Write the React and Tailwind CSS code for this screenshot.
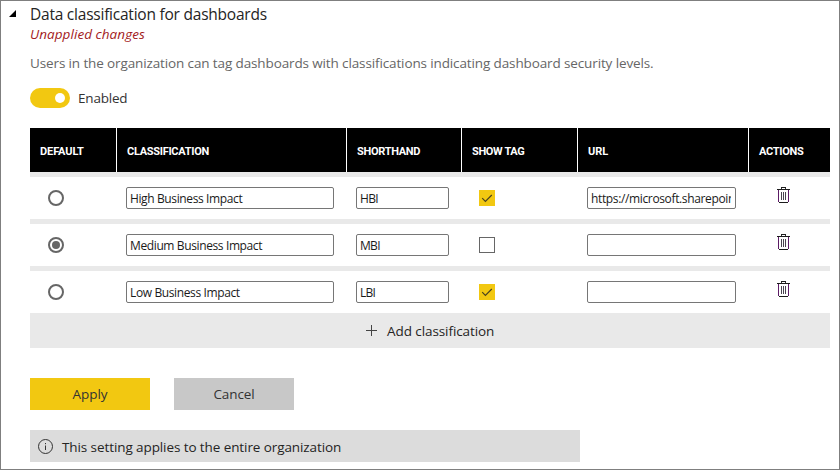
import React, { useState } from 'react';

const COLUMNS = 'grid grid-cols-[87px_230px_115px_116px_171px_81px]';

const HEADERS = [
  { label: 'DEFAULT', style: 'border-r tracking-[-0.1px]' },
  { label: 'CLASSIFICATION', style: 'border-r tracking-[-0.29px]' },
  { label: 'SHORTHAND', style: 'border-r tracking-[-0.3px]' },
  { label: 'SHOW TAG', style: 'border-r tracking-[-0.35px]' },
  { label: 'URL', style: 'border-r' },
  { label: 'ACTIONS', style: 'tracking-[-0.28px]' },
];

const INITIAL_ROWS = [
  { name: 'High Business Impact', short: 'HBI', tag: true, url: 'https://microsoft.sharepoint.com' },
  { name: 'Medium Business Impact', short: 'MBI', tag: false, url: '' },
  { name: 'Low Business Impact', short: 'LBI', tag: true, url: '' },
];

function Field({ value, label, size }) {
  return (
    <div className={`${size} h-[22px] rounded-[2px] border border-[#767676] bg-white pl-[3px] pr-[4px] pt-px`}>
      <input
        aria-label={label}
        defaultValue={value}
        className="block h-[19px] w-full overflow-hidden bg-transparent p-0 text-[12px] leading-[19px] text-[#1a1a1a] outline-none"
      />
    </div>
  );
}

function TrashIcon() {
  return (
    <svg width="13" height="16" viewBox="0 0 13 16" fill="none" shapeRendering="crispEdges">
      <path d="M0 2.5H13M4 .5H9M2 15.5H11" stroke="#1c1c1c" />
      <path d="M4.5 1V2M8.5 1V2" stroke="#333" />
      <path d="M1.5 3V15M11.5 3V15" stroke="#5c1c66" />
      <path d="M4.5 5V13M6.5 5V13M8.5 5V13" stroke="#4a4450" />
    </svg>
  );
}

function Radio({ checked, onClick }) {
  return (
    <button
      onClick={onClick}
      className="flex size-4 items-center justify-center rounded-full border-2 border-[#666] bg-white"
    >
      {checked && <span className="size-2 rounded-full bg-[#666]" />}
    </button>
  );
}

function Checkbox({ checked, onClick }) {
  return checked ? (
    <button onClick={onClick} className="size-4 bg-[#f2c811]">
      <svg width="16" height="16" viewBox="0 0 16 16" fill="none">
        <path d="M3.2 8.2L6.4 11.4L12.8 5" stroke="#4a4320" strokeWidth="1.2" />
      </svg>
    </button>
  ) : (
    <button onClick={onClick} className="size-4 border border-[#666] bg-white" />
  );
}

function Row({ row, index, selected, onSelect, onToggle }) {
  return (
    <div className={`${COLUMNS} h-[47px] border-t-[5px] border-[#e9e9e9] bg-white`}>
      <div className="flex items-center pl-[18px]">
        <Radio checked={selected === index} onClick={() => onSelect(index)} />
      </div>
      <div className="pl-[9px] pt-[10px]">
        <Field label="Classification" value={row.name} size="w-[208px] tracking-[-0.38px]" />
      </div>
      <div className="pl-[9px] pt-[10px]">
        <Field label="Shorthand" value={row.short} size="w-[93px] tracking-[-0.7px]" />
      </div>
      <div className="flex items-center pl-[17px]">
        <Checkbox checked={row.tag} onClick={() => onToggle(index)} />
      </div>
      <div className="pl-[9px] pt-[10px]">
        <Field label="URL" value={row.url} size="w-[149px] tracking-[-0.36px]" />
      </div>
      <div className="pl-[28px] pt-[10px]">
        <TrashIcon />
      </div>
    </div>
  );
}

export default function App() {
  const [rows, setRows] = useState(INITIAL_ROWS);
  const [selected, setSelected] = useState(1);
  const toggle = (index) =>
    setRows(rows.map((row, i) => (i === index ? { ...row, tag: !row.tag } : row)));

  return (
    <div className="flex h-[470px] w-[840px] overflow-hidden border border-[#7f7f7f] bg-white font-['Open_Sans','Noto_Sans',sans-serif] text-[13.5px] text-[#333]">
      <div className="w-[29px] shrink-0 pl-[8px] pt-[9px]">
        <svg width="7" height="7" viewBox="0 0 7 7">
          <path d="M7 0V7H0Z" fill="#000" />
        </svg>
      </div>
      <div className="w-[800px] shrink-0">
        <h1 className="mt-[3px] h-[20px] whitespace-nowrap text-[15.5px] leading-[20px] tracking-[-0.23px] text-[#252423]">
          Data classification for dashboards
        </h1>
        <p className="h-[20px] whitespace-nowrap text-[13.5px] italic leading-[20px] tracking-[0.06px] text-[#a31a22]">
          Unapplied changes
        </p>
        <p className="mt-[9px] h-[20px] whitespace-nowrap leading-[20px] tracking-[-0.123px] text-[#666]">
          Users in the organization can tag dashboards with classifications indicating dashboard security levels.
        </p>
        <div className="mt-[15px] flex h-[20px] items-center">
          <button className="flex h-[20px] w-[40px] items-center justify-end rounded-full bg-[#f2c811] pr-[5px]">
            <span className="size-[10px] rounded-full bg-white" />
          </button>
          <span className="ml-[8px] leading-[20px] tracking-[-0.2px]">Enabled</span>
        </div>

        <div className="mt-[20px]">
          <div className={`${COLUMNS} h-[44px] bg-black font-['Roboto',sans-serif] text-[11px] font-bold text-white`}>
            {HEADERS.map((header) => (
              <div key={header.label} className={`${header.style} flex items-center whitespace-nowrap border-white pl-[10px] pt-[4px]`}>
                {header.label}
              </div>
            ))}
          </div>
          {rows.map((row, i) => (
            <Row key={row.name} row={row} index={i} selected={selected} onSelect={setSelected} onToggle={toggle} />
          ))}
          <button className="flex h-[35px] w-full items-center bg-[#e9e9e9] pl-[336px] text-[#252423]">
            <svg width="11" height="11" viewBox="0 0 11 11" stroke="#444" fill="none" shapeRendering="crispEdges">
              <path d="M5.5 0V11M0 5.5H11" />
            </svg>
            <span className="ml-[10px] whitespace-nowrap pt-[2px] tracking-[-0.08px]">Add classification</span>
          </button>
        </div>

        <div className="mt-[30px] flex gap-6">
          <button className="h-8 w-[120px] bg-[#f2c811]">Apply</button>
          <button className="h-8 w-[120px] bg-[#c8c8c8] tracking-[-0.1px]">Cancel</button>
        </div>

        <div className="mt-[20px] flex h-8 w-[550px] items-center bg-[#dcdcdc] pl-[8px] text-[#252423]">
          <svg width="15" height="15" viewBox="0 0 15 15" fill="none" stroke="#333">
            <circle cx="7.5" cy="7.5" r="7" />
            <path d="M7.5 6.5V11M7.5 4V5.2" />
          </svg>
          <span className="ml-[9px] whitespace-nowrap pt-[3px] tracking-[-0.09px]">This setting applies to the entire organization</span>
        </div>
      </div>
    </div>
  );
}
